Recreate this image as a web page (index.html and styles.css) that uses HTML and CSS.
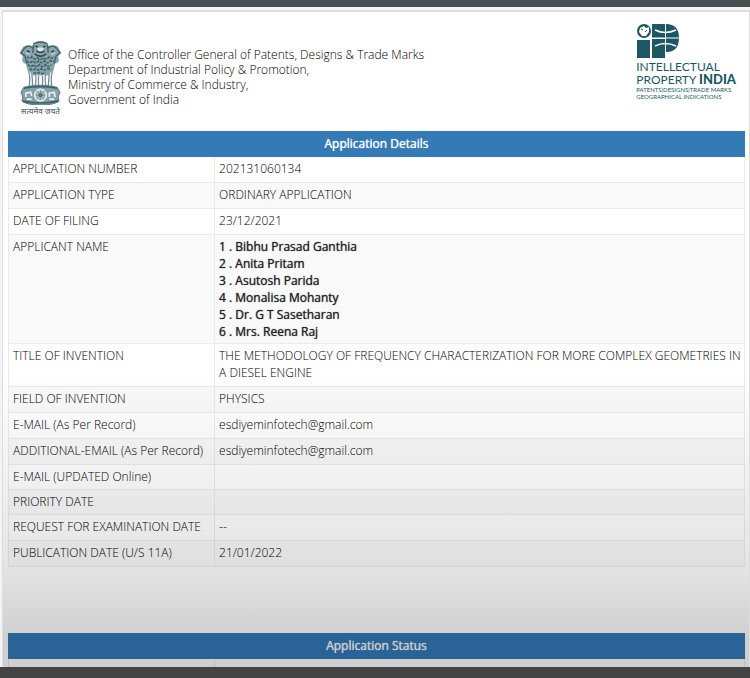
FILE: index.html
```html
<!DOCTYPE html>
<html lang="en">
<head>
  <meta charset="UTF-8" />
  <meta name="viewport" content="width=device-width, initial-scale=1.0" />
  <title>Application Details</title>
  <link rel="stylesheet" href="styles.css">
</head>
<body>
  <div class="top-bar"></div>
  <main class="panel">
    <header class="header">
      <div class="emblem">
        <svg class="emblem-icon" viewBox="0 0 44 66" preserveAspectRatio="none" aria-hidden="true">
          <!-- lions -->
          <path d="M15 3q7-4 14 0l2 4q5-3 9 0l3 6-3 4 1 4q-2 3-4 3l-2 8-5 4H14l-5-4-2-8q-3 0-4-4l1-3-3-4 3-6q4-3 9 0z" fill="#8ba5ac"/>
          <path d="M15 4q7-4 14 0M14 8q-4-4-8 0l-4 5 4 3M30 8q4-4 8 0l4 5-4 3M6 16l2 8M38 16l-2 8M15 5l-1 8M29 5l1 8" fill="none" stroke="#48656f" stroke-width="1.5"/>
          <path d="M17 6l3 2M27 6l-3 2M18 11q4 3 8 0M16 14q6 5 12 0M8 11l3 1M36 11l-3 1" fill="none" stroke="#203f4a" stroke-width="1.5"/>
          <path d="M19 8h6l-1 3h-4zM7 13l4 2M37 13l-4 2" fill="#e0e9ea" stroke="#dce6e8"/>
          <path d="M8 17q3 3 5 0 3 4 6 1 3 3 6 0 3 3 6-1 2 3 5 0M8 21q3 4 6 0 3 4 6 0 3 4 6 0 3 4 6 0l4 1M9 25q3 4 6 0 3 4 6 0 3 4 6 0 3 4 6 0M11 29q3 3 6 0 3 3 6 0 3 3 6 0l4 1M15 33q3 2 6 0 3 2 6 0" fill="none" stroke="#3f616b" stroke-width="1.7" stroke-dasharray="3 1"/>
          <!-- legs -->
          <path d="M10 32q2 9 0 16h4q0-8-1-14M17 35q1 8-1 13h4V36M24 36v12h4q-2-6-1-13M31 34q-1 8-1 14h4q-2-7 0-16" fill="#eef3f4" stroke="#6d8b93" stroke-width="1.2"/>
          <!-- abacus -->
          <path d="M5 48q17-4 34 0l3 5-2 5 1 4q-5 4-19 4T3 62l1-4-2-5z" fill="#86a1a8" stroke="#557680"/>
          <path d="M5 49q17-3 34 0M4 62q18 4 36 0" fill="none" stroke="#3a5e69" stroke-width="1.7"/>
          <circle cx="22" cy="56" r="6" fill="#a7bbc0" stroke="#e6edef" stroke-width="1.5"/>
          <circle cx="22" cy="56" r="2" fill="#395c66"/>
          <path d="M22 51v10M17 56h10M18 52l8 8M26 52l-8 8" stroke="#5d7e88" stroke-width=".7"/>
          <path d="M7 58v-4l5-1 1 4M31 58v-4l5-1 1 5M8 60h5M31 60h5" fill="none" stroke="#e7eff0" stroke-width="1.7"/>
        </svg>
        <span class="motto" lang="hi">सत्यमेव जयते</span>
      </div>
      <p class="office">
        Office of the Controller General of Patents, Designs &amp; Trade Marks<br>
        Department of Industrial Policy &amp; Promotion,<br>
        Ministry of Commerce &amp; Industry,<br>
        Government of India
      </p>
      <div class="ip-logo">
        <svg class="ip-icon" viewBox="0 0 44 36" aria-hidden="true">
          <g fill="#1c5763">
            <circle cx="8" cy="7" r="7"/>
            <path d="M1 16h13v18H1zM16 0h13v14H16zM16 15h13v19H16zM30 0q13 0 13 14T30 28z"/>
          </g>
          <path d="M4 4l4-2 2 2 3-1v5l-3 4H6l-3-4z" fill="#fff"/>
          <path d="M5 5l2 1M9 8l2-2" stroke="#1c5763"/>
          <path d="M19 6q10 5 21 0M19 22q10-5 21 0" fill="none" stroke="#fff" stroke-width="1.5"/>
          <path d="M16 14h28" stroke="#fff"/>
        </svg>
        <div class="ip-name">INTELLECTUAL<br>PROPERTY <b>INDIA</b></div>
        <div class="ip-tags">PATENTS|DESIGNS|TRADE MARKS<br>GEOGRAPHICAL INDICATIONS</div>
      </div>
    </header>

    <table class="details">
      <colgroup>
        <col class="label-col">
        <col>
      </colgroup>
      <thead>
        <tr><th colspan="2">Application Details</th></tr>
      </thead>
      <tbody>
        <tr><th scope="row">APPLICATION NUMBER</th><td>202131060134</td></tr>
        <tr><th scope="row">APPLICATION TYPE</th><td>ORDINARY APPLICATION</td></tr>
        <tr><th scope="row">DATE OF FILING</th><td>23/12/2021</td></tr>
        <tr>
          <th scope="row">APPLICANT NAME</th>
          <td class="applicants">
            1 . Bibhu Prasad Ganthia<br>
            2 . Anita Pritam<br>
            3 . Asutosh Parida<br>
            4 . Monalisa Mohanty<br>
            5 . Dr. G T Sasetharan<br>
            6 . Mrs. Reena Raj
          </td>
        </tr>
        <tr><th scope="row">TITLE OF INVENTION</th><td>THE METHODOLOGY OF FREQUENCY CHARACTERIZATION FOR MORE COMPLEX GEOMETRIES IN A DIESEL ENGINE</td></tr>
        <tr><th scope="row">FIELD OF INVENTION</th><td>PHYSICS</td></tr>
        <tr><th scope="row">E-MAIL (As Per Record)</th><td>esdiyeminfotech@gmail.com</td></tr>
        <tr><th scope="row">ADDITIONAL-EMAIL (As Per Record)</th><td>esdiyeminfotech@gmail.com</td></tr>
        <tr class="empty"><th scope="row">E-MAIL (UPDATED Online)</th><td></td></tr>
        <tr class="empty"><th scope="row">PRIORITY DATE</th><td></td></tr>
        <tr><th scope="row">REQUEST FOR EXAMINATION DATE</th><td>--</td></tr>
        <tr><th scope="row">PUBLICATION DATE (U/S 11A)</th><td>21/01/2022</td></tr>
      </tbody>
    </table>

    <table class="details">
      <colgroup>
        <col class="label-col">
        <col>
      </colgroup>
      <thead>
        <tr><th colspan="2">Application Status</th></tr>
      </thead>
      <tbody>
        <tr><th scope="row"></th><td></td></tr>
      </tbody>
    </table>
    <div class="fade"></div>
  </main>
  <div class="bottom-bar"></div>
</body>
</html>
```
FILE: styles.css
```css
* {
  box-sizing: border-box;
}

body {
  margin: 0;
  height: 100vh;
  display: flex;
  flex-direction: column;
  overflow: hidden;
  background: #f4f4f4;
  color: #000;
  font-family: "Open Sans", "Noto Sans", sans-serif;
  font-size: 12px;
  font-weight: 300;
  line-height: 17px;
}

.top-bar {
  flex: none;
  height: 7px;
  background: #4b4e51;
}

.bottom-bar {
  flex: none;
  height: 11px;
  background: #444;
}

.panel {
  position: relative;
  flex: 1;
  min-height: 0;
  overflow: hidden;
  margin: 3px 0 0 2px;
  padding: 3px 4px 0 5px;
  border: 1px solid #ddd;
  border-width: 2px 1px 0;
  background: #fff;
}

.header {
  display: flex;
  align-items: flex-start;
  height: 116px;
  padding: 9px 9px 0 11px;
}

.emblem {
  display: flex;
  flex-direction: column;
  align-items: center;
  width: 43px;
  margin-top: 16px;
}

.emblem-icon {
  width: 43px;
  height: 65px;
}

.motto {
  font-size: 8px;
  font-weight: 400;
  line-height: 12px;
  white-space: nowrap;
  color: #36545f;
}

.office {
  flex: 1;
  margin: 23px 0 0 6px;
  line-height: 15px;
}

.ip-logo {
  color: #1c5763;
  font-family: Lato, sans-serif;
  font-weight: 400;
  white-space: nowrap;
}

.ip-icon {
  display: block;
  width: 44px;
  height: 36px;
}

.ip-name {
  font-size: 12px;
  line-height: 13px;
}

.ip-name b {
  font-size: 13px;
  font-weight: 900;
}

.ip-tags {
  font-size: 6px;
  line-height: 7px;
}

.details {
  width: 100%;
  margin-bottom: 66px;
  border-collapse: collapse;
  table-layout: fixed;
}

.label-col {
  width: 28%;
}

.details th,
.details td {
  padding: 3px 0 5px 4px;
  border: 1px solid #ebebeb;
  text-align: left;
  vertical-align: top;
  font-weight: 300;
}

.details thead th {
  padding: 4px;
  border-color: #337ab7;
  background: #337ab7;
  color: #fff;
  text-align: center;
  font-weight: 400;
  line-height: 16px;
  text-shadow: 0 0 1px #fff;
}

.details tbody tr {
  height: 26px;
}

.details tbody tr:nth-child(even) {
  background: #f9f9f9;
}

.details .empty th {
  padding-bottom: 4px;
}

.details tbody .empty {
  height: 25px;
}

.details .applicants {
  padding-bottom: 3px;
  font-weight: 400;
  color: #222;
  text-shadow: 0 0 1px #444;
}

.fade {
  position: absolute;
  inset: 0;
  background: linear-gradient(transparent 55%, rgba(0, 0, 0, 0.1) 84%, rgba(0, 0, 0, 0.19) 96%);
  pointer-events: none;
}
```
